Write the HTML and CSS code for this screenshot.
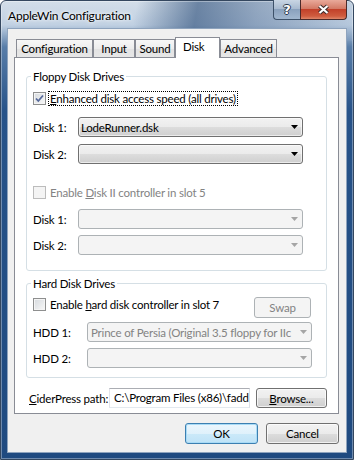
FILE: index.html
```html
<!DOCTYPE html>
<html lang="en">
<head>
    <meta charset="UTF-8">
    <meta name="viewport" content="width=device-width, initial-scale=1.0">
    <title>AppleWin Configuration</title>
    <link rel="stylesheet" href="styles.css">
</head>
<body>
    <div class="window">
        <div class="titlebar">
            <span class="title">AppleWin Configuration</span>
            <div class="caption-buttons">
                <div class="cap-btn help-btn"><span>?</span></div>
                <div class="cap-btn close-btn">
                    <svg width="13" height="11" viewBox="0 0 13 11">
                        <path d="M2.5 2 L10.5 9 M10.5 2 L2.5 9" stroke="#3b2b2b" stroke-width="4.2" fill="none"/>
                        <path d="M2.5 2 L10.5 9 M10.5 2 L2.5 9" stroke="#fff" stroke-width="2.2" fill="none"/>
                    </svg>
                </div>
            </div>
        </div>

        <div class="client">
            <div class="tabs">
                <div class="tab tab-config">Configuration</div>
                <div class="tab tab-input">Input</div>
                <div class="tab tab-sound">Sound</div>
                <div class="tab tab-disk active">Disk</div>
                <div class="tab tab-adv">Advanced</div>
            </div>

            <div class="panel">
                <div class="group floppy">
                    <div class="group-title">Floppy Disk Drives</div>
                    <div class="check-row row-enhanced">
                        <span class="checkbox">
                            <svg width="11" height="11" viewBox="0 0 11 11"><path d="M2 5.5 L4.3 8 L9 2.5" stroke="#56699a" stroke-width="1.8" fill="none"/></svg>
                        </span>
                        <span class="check-label focus"><u>E</u>nhanced disk access speed (all drives)</span>
                    </div>
                    <div class="field-row row-d1">
                        <span class="field-label">Disk 1:</span>
                        <div class="combo">
                            <span class="combo-text">LodeRunner.dsk</span>
                            <svg class="arrow" width="7" height="4" viewBox="0 0 7 4"><path d="M0 0H7L3.5 4Z"/></svg>
                        </div>
                    </div>
                    <div class="field-row row-d2">
                        <span class="field-label">Disk 2:</span>
                        <div class="combo">
                            <span class="combo-text"></span>
                            <svg class="arrow" width="7" height="4" viewBox="0 0 7 4"><path d="M0 0H7L3.5 4Z"/></svg>
                        </div>
                    </div>
                    <div class="check-row row-slot5">
                        <span class="checkbox disabled"></span>
                        <span class="check-label muted">Enable <u>D</u>isk II controller in slot 5</span>
                    </div>
                    <div class="field-row row-s5d1">
                        <span class="field-label">Disk 1:</span>
                        <div class="combo disabled">
                            <span class="combo-text"></span>
                            <svg class="arrow" width="7" height="4" viewBox="0 0 7 4"><path d="M0 0H7L3.5 4Z"/></svg>
                        </div>
                    </div>
                    <div class="field-row row-d2">
                        <span class="field-label">Disk 2:</span>
                        <div class="combo disabled">
                            <span class="combo-text"></span>
                            <svg class="arrow" width="7" height="4" viewBox="0 0 7 4"><path d="M0 0H7L3.5 4Z"/></svg>
                        </div>
                    </div>
                </div>

                <div class="group hard">
                    <div class="group-title">Hard Disk Drives</div>
                    <div class="hard-top">
                        <div class="check-row">
                            <span class="checkbox"></span>
                            <span class="check-label">Enable <u>h</u>ard disk controller in slot 7</span>
                        </div>
                        <div class="btn swap">Swap</div>
                    </div>
                    <div class="field-row row-hdd1">
                        <span class="field-label">HDD 1:</span>
                        <div class="combo disabled">
                            <span class="combo-text">Prince of Persia (Original 3.5 floppy for IIc</span>
                            <svg class="arrow" width="7" height="4" viewBox="0 0 7 4"><path d="M0 0H7L3.5 4Z"/></svg>
                        </div>
                    </div>
                    <div class="field-row row-d2">
                        <span class="field-label">HDD 2:</span>
                        <div class="combo disabled">
                            <span class="combo-text"></span>
                            <svg class="arrow" width="7" height="4" viewBox="0 0 7 4"><path d="M0 0H7L3.5 4Z"/></svg>
                        </div>
                    </div>
                </div>

                <div class="path-row">
                    <span class="path-label"><u>C</u>iderPress path:</span>
                    <div class="edit">C:\Program Files (x86)\fadd</div>
                    <div class="btn browse"><span><u>B</u>rowse...</span></div>
                </div>
            </div>

            <div class="dialog-buttons">
                <div class="btn default">OK</div>
                <div class="btn">Cancel</div>
            </div>
        </div>
    </div>
</body>
</html>
```

FILE: styles.css
```css
* {
    box-sizing: border-box;
}

body {
    margin: 0;
    font-family: Lato, "Liberation Sans", sans-serif;
    font-size: 11.5px;
    letter-spacing: -0.2px;
    color: #000;
    background: #fff;
}

/* window frame */
.window {
    width: 354px;
    height: 460px;
    border: 1px solid #34475f;
    border-radius: 6px 6px 0 0;
    padding: 0 6px 6px;
    background:
        linear-gradient(100deg, rgba(255, 255, 255, 0) 38%, rgba(40, 74, 118, 0.6) 55%, rgba(60, 92, 135, 0.4) 72%, rgba(150, 175, 205, 0.2) 100%) 0 0 / 100% 40px no-repeat,
        linear-gradient(180deg, #d3dee9 0, #c0d0e2 24px, #587da8 46px, #275389 110px, #1f4a80 100%);
    box-shadow: inset 0 0 0 1px rgba(255, 255, 255, 0.35);
}

.titlebar {
    height: 27px;
    display: flex;
    align-items: flex-start;
}

.title {
    margin: 7px 0 0 1px;
    line-height: 15px;
    font-size: 12px;
    text-shadow: 0 0 6px #fff, 0 0 3px #fff;
}

.caption-buttons {
    margin-left: auto;
    margin-top: -1px;
    display: flex;
}

.cap-btn {
    height: 20px;
    display: flex;
    align-items: center;
    justify-content: center;
    border: 1px solid #3d5169;
    border-top: none;
}

.help-btn {
    width: 27px;
    border-right: none;
    border-radius: 0 0 0 4px;
    background: linear-gradient(#c9d6e4, #a9bbd0 45%, #8aa1bd 50%, #a2b7cf);
}

.help-btn span {
    color: #fff;
    font: bold 13px "DejaVu Sans", sans-serif;
    text-shadow: 1px 0 #2b3a4e, -1px 0 #2b3a4e, 0 1px #2b3a4e, 0 -1px #2b3a4e;
}

.close-btn {
    width: 47px;
    border-radius: 0 0 4px 0;
    border-color: #4b2a2a;
    background: linear-gradient(#e9a99a, #d37a66 45%, #c2412a 50%, #cf5c3f 85%, #e0876a);
}

/* client area */
.client {
    width: 340px;
    height: 425px;
    border: 1px solid #8ea3bd;
    background: #f0f0f0;
    padding: 8px 7px 0 6px;
}

.tabs {
    display: flex;
    align-items: flex-end;
    height: 20px;
    padding-left: 2px;
}

.tab {
    height: 18px;
    border: 1px solid #898c95;
    border-bottom: none;
    background: linear-gradient(#f7f7f7, #ededed 50%, #e2e2e2 50%, #e7e7e7);
    line-height: 17px;
    text-align: center;
}

.tab-config { width: 77px; }
.tab-input { width: 42px; }
.tab-sound { width: 40px; }
.tab-disk { width: 45px; }
.tab-adv { width: 57px; }

.tab.active {
    height: 21px;
    margin-bottom: -1px;
    background: #fff;
    position: relative;
    z-index: 1;
    text-align: left;
    padding-left: 7px;
}

.panel {
    height: 357px;
    border: 1px solid #898c95;
    background: #fff;
    padding: 18px 11px 5px;
}

/* group boxes */
.group {
    border: 1px solid #d5dfe5;
    border-radius: 3px;
}

.floppy {
    padding-bottom: 15px;
}

.hard {
    margin-top: 12px;
    padding-bottom: 9px;
}

.group-title {
    width: fit-content;
    margin: -8px 0 0 4px;
    padding: 0 2px;
    background: #fff;
    line-height: 15px;
}

.check-row {
    display: flex;
    align-items: center;
    height: 15px;
    padding-left: 6px;
}

.checkbox {
    width: 13px;
    height: 13px;
    margin-right: 2px;
    border: 1px solid #8e8f8f;
    background: linear-gradient(135deg, #d6dade, #f8f8f8);
    box-shadow: inset 0 0 0 1px #f4f4f4;
    display: flex;
}

.checkbox.disabled {
    border-color: #bcbcbc;
    background: #f4f4f4;
    box-shadow: none;
}

.check-label {
    border: 1px solid transparent;
    padding: 0 1px;
    line-height: 13px;
    white-space: nowrap;
}

.check-label.focus {
    border: 1px dotted #000;
}

.muted {
    color: #838383;
}

.row-enhanced { margin-top: 7px; }
.row-d1 { margin-top: 11px; }
.row-d2 { margin-top: 6px; }
.row-slot5 { margin-top: 21px; }
.row-s5d1 { margin-top: 9px; }
.row-hdd1 { margin-top: 4px; }

.floppy .row-d1 + .row-d2 {
    margin-top: 7px;
}

.field-row {
    display: flex;
    align-items: center;
    padding-left: 6px;
}

.field-label {
    width: 45px;
}

.hard .field-label {
    width: 54px;
}

.combo {
    width: 225px;
    height: 20px;
    border: 1px solid #707070;
    border-radius: 3px;
    background: linear-gradient(#f2f2f2, #ebebeb 50%, #dddddd 50%, #cfcfcf);
    box-shadow: inset 0 0 0 1px rgba(255, 255, 255, 0.6);
    display: flex;
    align-items: center;
    padding: 0 4px 0 2px;
}

.combo-text {
    flex: 1;
    overflow: hidden;
    white-space: nowrap;
}

.arrow path {
    fill: #000;
}

.combo.disabled {
    border-color: #adb2b5;
    background: #f4f4f4;
    box-shadow: none;
    color: #838383;
    padding-left: 3px;
}

.combo.disabled .arrow path {
    fill: #a5a5a5;
}

.hard-top {
    display: flex;
    align-items: flex-start;
    margin-top: 6px;
}

/* buttons */
.btn {
    width: 73px;
    height: 21px;
    border: 1px solid #707070;
    border-radius: 3px;
    background: linear-gradient(#f2f2f2, #ebebeb 50%, #dddddd 50%, #cfcfcf);
    box-shadow: inset 0 0 0 1px rgba(255, 255, 255, 0.7);
    display: flex;
    align-items: center;
    justify-content: center;
}

.btn.swap {
    width: 57px;
    margin-left: auto;
    margin-right: 15px;
    border-color: #adb2b5;
    background: #f4f4f4;
    box-shadow: none;
    color: #838383;
}

.btn.browse {
    height: 20px;
    margin-left: 6px;
}

.btn.default {
    border-color: #3c7fb1;
    background: linear-gradient(#ebf6fd, #dff1fb 50%, #cbe9f9 50%, #bfe3f7);
    box-shadow: inset 0 0 0 1px #a9dbf6;
}

.path-row {
    display: flex;
    align-items: center;
    margin-top: 10px;
    padding-left: 3px;
}

.path-label {
    width: 82px;
    white-space: nowrap;
}

.edit {
    width: 144px;
    height: 20px;
    border: 1px solid;
    border-color: #abadb3 #dbdfe6 #e3e9ef #e2e3ea;
    background: #fff;
    padding-left: 4px;
    line-height: 18px;
    overflow: hidden;
    white-space: nowrap;
}

.dialog-buttons {
    display: flex;
    justify-content: flex-end;
    gap: 8px;
    margin-top: 9px;
}
```
